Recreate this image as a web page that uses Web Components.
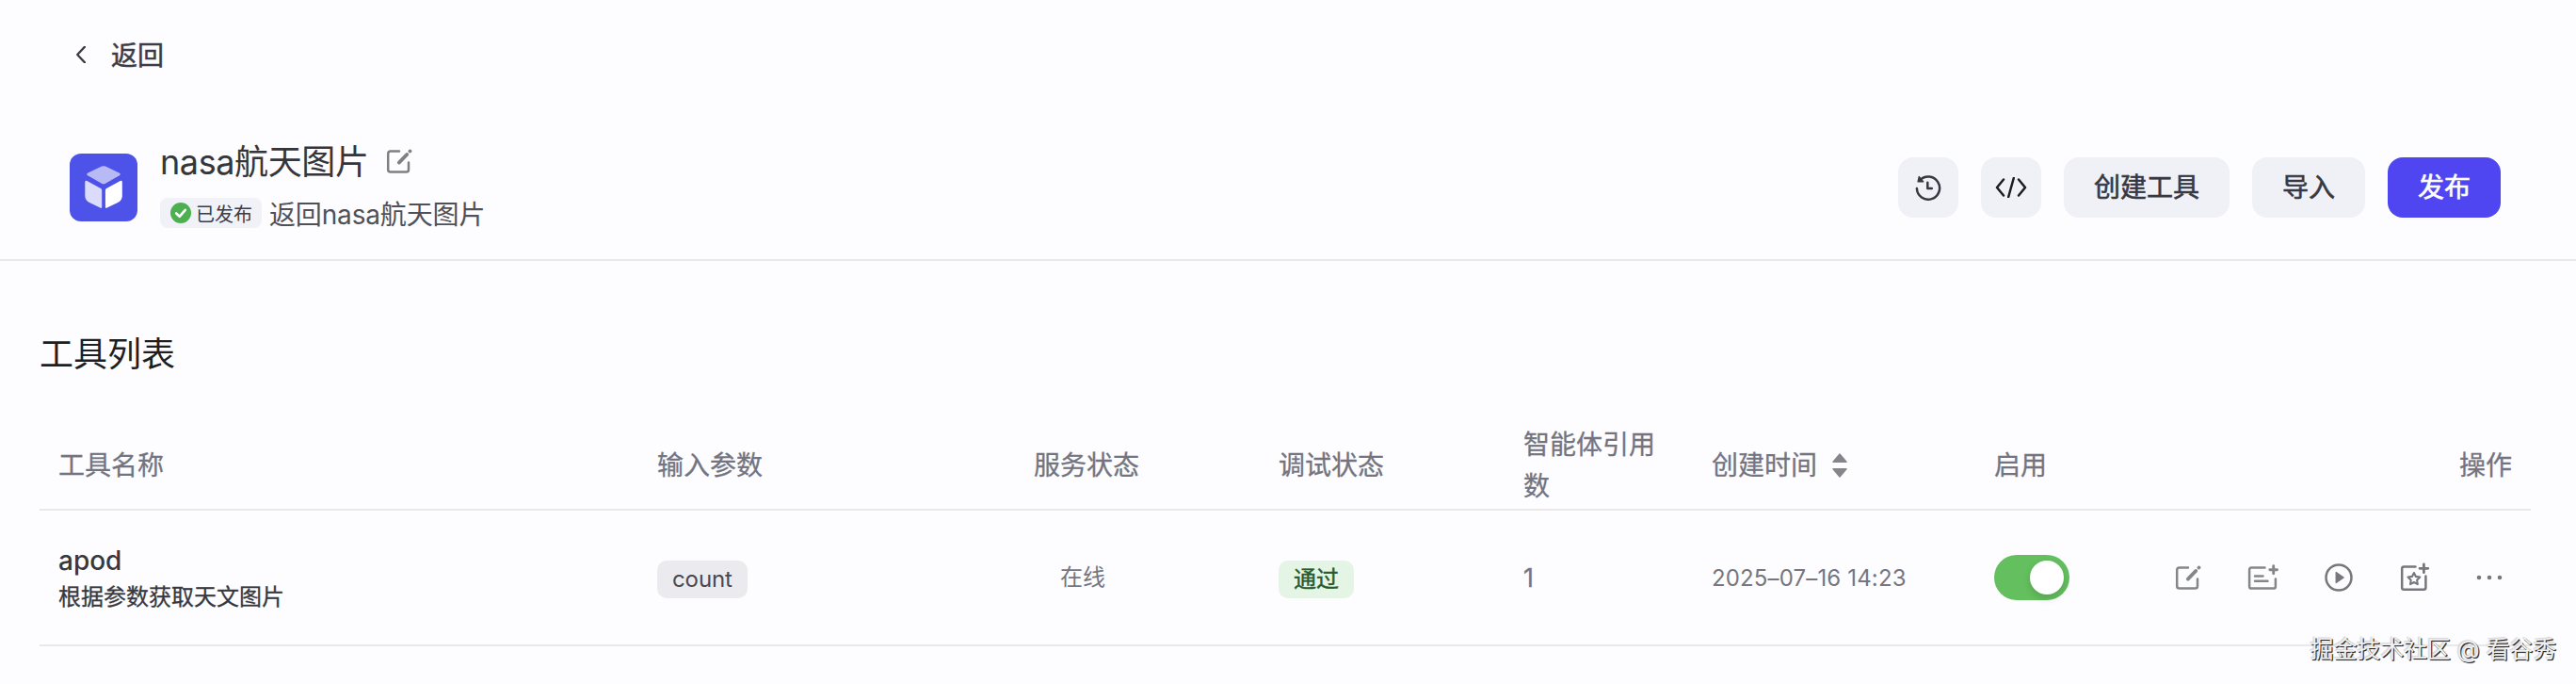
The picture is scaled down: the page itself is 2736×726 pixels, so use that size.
<!DOCTYPE html>
<html lang="zh-CN">
<head>
<meta charset="utf-8">
<title>工具列表</title>
<style>
  body { margin: 0; background: #fdfdff; }
</style>
</head>
<body>
<tool-page></tool-page>
<script>
const define = (name, css, html) => {
  customElements.define(name, class extends HTMLElement {
    constructor() {
      super();
      const t = document.createElement('template');
      t.innerHTML = `<style>*{box-sizing:border-box}${css}</style>${html}`;
      this.attachShadow({ mode: 'open' }).append(t.content.cloneNode(true));
    }
  });
};

const ICONS = {
  back: [10, 18, '<path d="M9 0.600 1.200 9 9 17.400" fill="none" stroke="#3b3c45" stroke-width="2.300" stroke-linecap="round" stroke-linejoin="round"/>'],
  edit: [28, 28, '<g fill="none" stroke="currentColor" stroke-width="2.500" stroke-linecap="round"><path d="M14 3.600H4.800Q2.200 3.600 2.200 6.200V23Q2.200 25.600 4.800 25.600H21.400Q24 25.600 24 23V15.500"/><path d="M13.800 15.600 22.300 6.900" stroke-width="3.700"/><path d="M25.400 3.500 25.500 3.400" stroke-width="3.700"/></g>'],
  note: [34, 30, '<g fill="none" stroke="currentColor" stroke-width="2.500" stroke-linecap="round"><path d="M18.500 4.600H4.200Q2.100 4.600 2.100 6.700V24.500Q2.100 26.600 4.200 26.600H27.800Q29.900 26.600 29.900 24.500V16.500"/><path d="M8 13.400H16.500M8 18.700H21.500"/><path d="M23.800 6.700H31.500M27.700 2.800V10.700" stroke-width="2.900"/></g>'],
  play: [30, 30, '<circle cx="15" cy="15" r="13.500" fill="none" stroke="currentColor" stroke-width="2.500"/><path d="M12.200 9.500 20.200 15 12.200 20.500Z" fill="currentColor" stroke="currentColor" stroke-width="1.300" stroke-linejoin="round"/>'],
  star: [32, 32, '<g fill="none" stroke="currentColor" stroke-width="2.500" stroke-linecap="round" stroke-linejoin="round"><path d="M16.500 4.600H4.200Q2.200 4.600 2.200 6.600V26.800Q2.200 28.800 4.200 28.800H25.400Q27.400 28.800 27.400 26.800V14.500"/><path d="M21 6.300H29.800M25.400 2V10.700" stroke-width="2.800"/><path d="M14.900 11 16.900 14.900 21.300 15.600 18.100 18.700 18.800 23.100 14.900 21 11 23.100 11.700 18.700 8.500 15.600 12.900 14.900Z" stroke-width="2.100"/></g>'],
  dots: [28, 8, '<g fill="currentColor"><circle cx="3" cy="4" r="2.300"/><circle cx="14" cy="4" r="2.300"/><circle cx="25" cy="4" r="2.300"/></g>'],
  history: [28, 28, '<g fill="none" stroke="currentColor" stroke-width="2.500" stroke-linecap="round" stroke-linejoin="round"><path d="M1.900 15A12.100 12.100 0 1 0 5 6.500"/><path d="M13.300 8.800V15H17.800"/></g><path d="M4.200 2.500 3 8H8.800Z" fill="currentColor" stroke="currentColor" stroke-width="1.200" stroke-linejoin="round"/>'],
  code: [34, 22, '<path d="M9 2.500 2 11 9 19.500M25 2.500 32 11 25 19.500M19.800 1 14.200 21" fill="none" stroke="#1c1d22" stroke-width="2.500" stroke-linecap="round" stroke-linejoin="round"/>'],
  check: [22, 22, '<circle cx="11" cy="11" r="11" fill="#4caf50"/><path d="M6.200 11.500 9.700 14.800 15.800 7.800" fill="none" stroke="#fff" stroke-width="2.600" stroke-linecap="round" stroke-linejoin="round"/>'],
  sort: [16, 26, '<path d="M8 1 15 9.300H1ZM8 25 15 16.700H1Z" fill="#85868c" stroke="#85868c" stroke-width="1.400" stroke-linejoin="round"/>'],
  cube: [72, 72, '<rect width="72" height="72" rx="12" fill="#4d53e8"/><path d="M34 13.600Q36 12.700 38 13.600L52.600 20.400Q55 21.700 52.800 23.200L38 31.700Q36 32.800 34 31.700L19.200 23.200Q17 21.700 19.400 20.400Z" fill="#b8baf6"/><path d="M18.400 29 33 37Q34.200 37.700 34.200 39V56.500Q34.200 58.500 32.400 57.600L21 52Q16.300 49.600 16.300 45V30.200Q16.300 28 18.400 29Z" fill="#dbdcfb"/><path d="M53.700 29 39.100 37Q37.900 37.700 37.900 39V56.500Q37.900 58.500 39.700 57.600L51.100 52Q55.800 49.600 55.800 45V30.200Q55.800 28 53.700 29Z" fill="#fff"/>']
};
customElements.define('ui-icon', class extends HTMLElement {
  connectedCallback() {
    if (this.shadowRoot) return;
    const [w, h, body] = ICONS[this.getAttribute('name')];
    this.attachShadow({ mode: 'open' }).innerHTML =
      `<style>:host{display:block;flex:none;width:${w}px;height:${h}px}svg{display:block}</style><svg width="${w}" height="${h}" viewBox="0 0 ${w} ${h}">${body}</svg>`;
  }
});

define('ui-button', `
  :host{display:flex;align-items:center;justify-content:center;box-sizing:border-box;height:64px;padding:0 32px;border-radius:16px;background:#f0f1f7;color:#363842;font-size:28px;line-height:40px;-webkit-text-stroke:.6px currentColor}
  :host([square]){width:64px;padding:0}
  :host([primary]){background:#4f46f2;color:#fff}`, '<slot></slot>');

define('ui-chip', `
  :host{display:inline-flex;align-items:center;justify-content:center;box-sizing:border-box;height:40px;padding:0 16px;border-radius:10px;background:#ebebef;color:#484951;font-size:24px;line-height:32px;letter-spacing:-.1px}
  :host([tone=ok]){letter-spacing:0;background:#e4f4e5;color:#285a2b;-webkit-text-stroke:.4px currentColor}`, '<slot></slot>');

define('ui-switch', `
  :host{display:flex;box-sizing:border-box;width:80px;height:48px;padding:6px;justify-content:flex-end;border-radius:24px;background:#64bf5e}
  i{width:36px;height:36px;border-radius:50%;background:#fff;box-shadow:0 4px 8px rgba(0,0,0,.14)}`, '<i></i>');

define('page-header', `
  :host{display:block;height:277px;border-bottom:2px solid #e9e9ed;box-sizing:border-box}
  .back{display:flex;align-items:center;gap:27px;height:118px;padding:0 0 2px 81px;color:#3b3c48;font-size:28px;-webkit-text-stroke:.5px currentColor}
  .back span{margin-top:-3px}
  .bar{display:flex;justify-content:space-between;padding:28px 80px 0 74px}
  .info{display:flex;gap:24px;padding-top:17px}
  .text{margin-top:-20px;display:flex;flex-direction:column}
  .title{display:flex;align-items:center;gap:18px;height:52px;font-size:36px;color:#35363c}
  .title span{letter-spacing:-.4px}
  .title ui-icon{color:#7f8086;margin-top:3px}
  .sub{display:flex;align-items:center;gap:8px;margin-top:13px;height:36px;font-size:28px;color:#505157;letter-spacing:-.15px}
  .tag{display:flex;align-items:center;gap:5px;height:32px;width:108px;padding-left:11px;border-radius:8px;background:#f1f2f8;font-size:20px;color:#3b3c48;letter-spacing:0}
  .actions{display:flex;gap:24px;padding-top:21px;color:#363842}`, `
  <div class="back"><ui-icon name="back"></ui-icon><span>返回</span></div>
  <div class="bar">
    <div class="info"><ui-icon name="cube"></ui-icon>
      <div class="text">
        <div class="title"><span>nasa航天图片</span><ui-icon name="edit"></ui-icon></div>
        <div class="sub"><span class="tag"><ui-icon name="check"></ui-icon><span>已发布</span></span><span>返回nasa航天图片</span></div>
      </div>
    </div>
    <div class="actions">
      <ui-button square><ui-icon name="history"></ui-icon></ui-button>
      <ui-button square><ui-icon name="code"></ui-icon></ui-button>
      <ui-button>创建工具</ui-button><ui-button>导入</ui-button><ui-button primary>发布</ui-button>
    </div>
  </div>`);

define('table-row', `
  :host{display:grid;grid-template-columns:636px 400px 260px 260px 200px 300px 1fr;align-items:center;box-sizing:border-box;height:144px;padding:0 20px;border-bottom:2px solid #e8e8eb}
  :host([head]){height:99px;padding-top:5px;font-size:28px;line-height:44px;color:#73747f;-webkit-text-stroke:.3px currentColor}`, '<slot></slot>');

define('tool-table', `
  :host{display:block;padding:0 48px 0 42px}
  h2{margin:72px 0 0;height:56px;line-height:54px;font-size:36px;font-weight:400;color:#1e1f23}
  table-row[head]{margin-top:38px}
  .narrow{width:144px}
  .sort{display:flex;align-items:center;gap:16px}
  .split{display:flex;justify-content:space-between;align-items:center}
  .ident{padding-top:4px}
  .name{font-size:28px;line-height:38px;font-weight:500;color:#37383e}
  .desc{font-size:24px;line-height:40px;color:#37383e;-webkit-text-stroke:.3px currentColor}
  .chip{padding-top:3px;display:flex}
  .muted{color:#75767e;font-size:24px}
  .refs{font-size:27px;-webkit-text-stroke:.3px currentColor}
  .online{padding:0 0 5px 28px}
  .date{letter-spacing:.15px}
  .ops{display:flex;justify-content:flex-end;align-items:center;color:#77787d}
  .edit{margin-right:49px;color:#85868b}.note{margin-right:48px;color:#85868b}.play{margin-right:50px}.star{margin-right:49px}.dots{margin-right:10px}`, `
  <h2>工具列表</h2>
  <table-row head><span>工具名称</span><span>输入参数</span><span>服务状态</span><span>调试状态</span><span class="narrow">智能体引用数</span><span class="sort"><span>创建时间</span><ui-icon name="sort"></ui-icon></span><span class="split"><span>启用</span><span>操作</span></span></table-row>
  <table-row>
    <div class="ident"><div class="name">apod</div><div class="desc">根据参数获取天文图片</div></div>
    <div class="chip"><ui-chip>count</ui-chip></div>
    <div class="muted online">在线</div>
    <div class="chip"><ui-chip tone="ok">通过</ui-chip></div>
    <div class="muted refs">1</div>
    <div class="muted date">2025–07–16 14:23</div>
    <div class="split"><ui-switch></ui-switch>
      <div class="ops"><ui-icon class="edit" name="edit"></ui-icon><ui-icon class="note" name="note"></ui-icon><ui-icon class="play" name="play"></ui-icon><ui-icon class="star" name="star"></ui-icon><ui-icon class="dots" name="dots"></ui-icon></div>
    </div>
  </table-row>`);

define('water-mark', `
  :host{position:absolute;right:21px;bottom:19px;font-size:25px;line-height:36px;letter-spacing:-.15px;white-space:nowrap;color:#f0f0f1;text-shadow:1px 1px 0 #2a2a2a,1px 1px 1px #555,-1px -1px 1px #d4d4d6}`, '<slot></slot>');

define('tool-page', `
  :host{display:block;position:relative;height:726px;overflow:hidden;background:#fdfdff;font-family:Inter,"Noto Sans CJK SC",sans-serif}`, `
  <page-header></page-header>
  <tool-table></tool-table>
  <water-mark>掘金技术社区 @ 看谷秀</water-mark>`);
</script>
</body>
</html>
